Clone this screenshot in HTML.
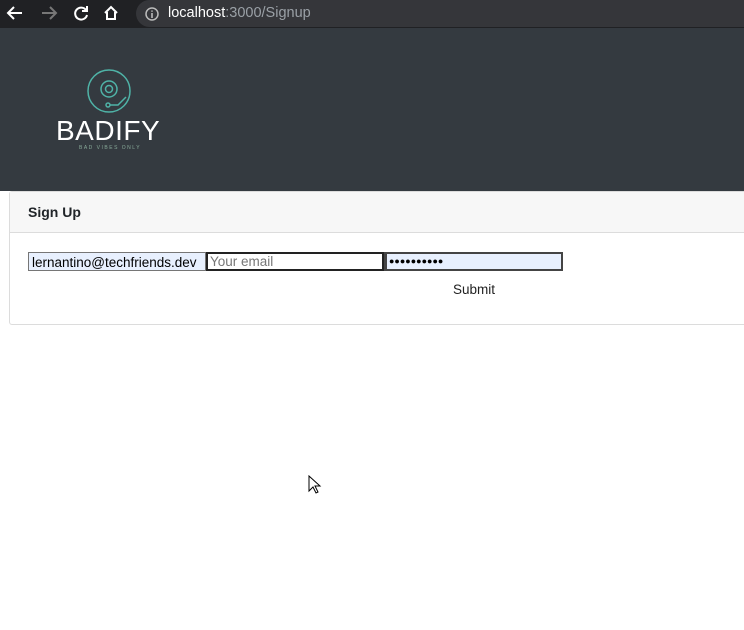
<!DOCTYPE html>
<html><head><style>
body{margin:0;width:744px;height:630px;background:#fff;font-family:"Liberation Sans",sans-serif;overflow:hidden;position:relative}
.top{position:absolute;left:0;top:0;width:744px;height:28px;background:#202124}
.url{position:absolute;left:136px;top:0;width:620px;height:27px;background:#35363a;border-radius:14px 0 0 14px}
.hdr{position:absolute;left:0;top:28px;width:744px;height:163px;background:#343a40}
.card{position:absolute;left:9px;top:191px;width:740px;height:132px;border:1px solid #dcdcdc;border-radius:3px}
.ch{height:40px;background:#f7f7f7;border-bottom:1px solid #dcdcdc;font-weight:bold;font-size:14px;line-height:41px;padding-left:18px;color:#212529}
.inp{position:absolute;top:60px;height:19px;font-size:13.5px;line-height:19px;box-sizing:border-box}
</style></head><body>
<div class="top">
<svg width="140" height="28" style="position:absolute;left:0;top:0" fill="none" stroke-width="2">
<path d="M22 13H9M14 7l-6 6 6 6" stroke="#fff"/>
<path d="M42 13h13M50 7l6 6-6 6" stroke="#777"/>
<path d="M86 10a6 6 0 1 0 1 5" stroke="#fff"/><path d="M87 6v5h-5" stroke="#fff"/>
<path d="M105 13l6-6 6 6M107 12v7h8v-7" stroke="#fff"/>
</svg>
<div class="url"></div>
<svg width="16" height="16" style="position:absolute;left:144px;top:6px"><circle cx="8" cy="8" r="6" stroke="#bbb" stroke-width="1.5" fill="none"/><path d="M8 7v5M8 4.5v1.3" stroke="#bbb" stroke-width="1.6"/></svg>
<div style="position:absolute;left:168px;top:5px;font-size:14.5px;color:#fff">localhost<span style="color:#9aa0a6">:3000/Signup</span></div>
</div>
<div class="hdr">
<svg width="60" height="50" style="position:absolute;left:80px;top:40px" fill="none" stroke="#4fb3a7" stroke-width="1.5">
<circle cx="29" cy="23" r="21"/><circle cx="29" cy="21" r="8"/><circle cx="29" cy="21" r="3.5"/>
<circle cx="28" cy="37" r="2"/><path d="M30 37h8l8-8"/>
</svg>
<div style="position:absolute;left:56px;top:87px;color:#fff;font-size:28px;letter-spacing:0.5px">BADIFY</div>
<div style="position:absolute;left:79px;top:117px;color:#8a9;font-size:5px;letter-spacing:1.5px">BAD VIBES ONLY</div>
</div>
<div class="card">
<div class="ch">Sign Up</div>
<div class="inp" style="left:18px;width:178px;background:#e8f0fe;border:1px solid #767676;padding-left:3px">lernantino@techfriends.dev</div>
<div class="inp" style="left:196px;width:178px;border:2px solid #222;color:#777;padding-left:2px;line-height:15px">Your email</div>
<div class="inp" style="left:374px;width:179px;background:#e8f0fe;border:2px solid #444;border-left-width:3px;padding-left:2px;font-size:9px;line-height:14px">●●●●●●●●●●</div>
<div style="position:absolute;left:443px;top:90px;font-size:13.5px;color:#222">Submit</div>
</div>
<svg width="14" height="22" style="position:absolute;left:308px;top:475px"><path d="M1 1v15l4-4 3 6 2-1-3-6h5z" fill="#fff" stroke="#000"/></svg>
</body></html>
